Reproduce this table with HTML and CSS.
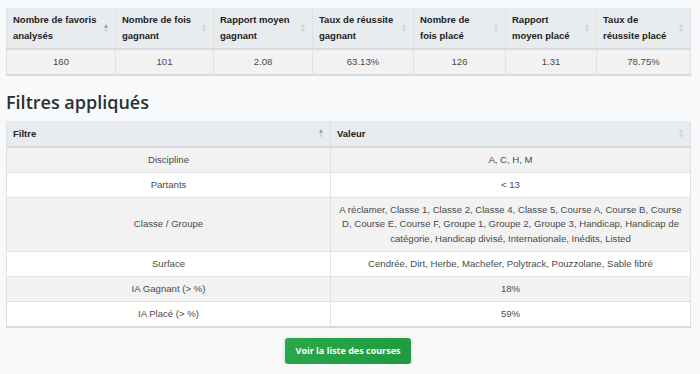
FILE: index.html
```html
<!DOCTYPE html>
<html lang="fr">
<head>
<meta charset="utf-8">
<title>Statistiques</title>
<link rel="stylesheet" href="styles.css">
</head>
<body>
<main class="page">
  <table class="grid stats">
    <thead>
      <tr>
        <th><div class="th-in"><span>Nombre de favoris analysés</span><span class="sort asc"><i class="up"></i><i class="down"></i></span></div></th>
        <th><div class="th-in"><span>Nombre de fois gagnant</span><span class="sort"><i class="up"></i><i class="down"></i></span></div></th>
        <th><div class="th-in"><span>Rapport moyen gagnant</span><span class="sort"><i class="up"></i><i class="down"></i></span></div></th>
        <th><div class="th-in"><span>Taux de réussite gagnant</span><span class="sort"><i class="up"></i><i class="down"></i></span></div></th>
        <th><div class="th-in"><span>Nombre de fois placé</span><span class="sort"><i class="up"></i><i class="down"></i></span></div></th>
        <th><div class="th-in"><span>Rapport moyen placé</span><span class="sort"><i class="up"></i><i class="down"></i></span></div></th>
        <th><div class="th-in"><span>Taux de réussite placé</span><span class="sort"><i class="up"></i><i class="down"></i></span></div></th>
      </tr>
    </thead>
    <tbody>
      <tr>
        <td>160</td><td>101</td><td>2.08</td><td>63.13%</td><td>126</td><td>1.31</td><td>78.75%</td>
      </tr>
    </tbody>
  </table>

  <h2 class="title">Filtres appliqués</h2>

  <table class="grid filters">
    <thead>
      <tr>
        <th><div class="th-in"><span>Filtre</span><span class="sort asc"><i class="up"></i><i class="down"></i></span></div></th>
        <th><div class="th-in"><span>Valeur</span><span class="sort"><i class="up"></i><i class="down"></i></span></div></th>
      </tr>
    </thead>
    <tbody>
      <tr><td>Discipline</td><td>A, C, H, M</td></tr>
      <tr><td>Partants</td><td>&lt; 13</td></tr>
      <tr><td>Classe / Groupe</td><td>A réclamer, Classe 1, Classe 2, Classe 4, Classe 5, Course A, Course B, Course D, Course E, Course F, Groupe 1, Groupe 2, Groupe 3, Handicap, Handicap de catégorie, Handicap divisé, Internationale, Inédits, Listed</td></tr>
      <tr><td>Surface</td><td>Cendrée, Dirt, Herbe, Machefer, Polytrack, Pouzzolane, Sable fibré</td></tr>
      <tr><td>IA Gagnant (&gt; %)</td><td>18%</td></tr>
      <tr><td>IA Placé (&gt; %)</td><td>59%</td></tr>
    </tbody>
  </table>

  <div class="actions">
    <a class="btn" href="#">Voir la liste des courses</a>
  </div>
</main>
</body>
</html>
```

FILE: styles.css
```css
html, body {
  margin: 0;
  padding: 0;
  background: #f8f9fa;
}
body {
  font-family: "Liberation Sans", Arial, sans-serif;
  color: #212529;
}
.page {
  width: 684px;
  margin: 0 0 0 6px;
  padding-top: 8px;
}
.grid {
  width: 684px;
  border-collapse: collapse;
  table-layout: fixed;
  font-size: 9.6px;
}
.grid th,
.grid td {
  box-sizing: border-box;
}
.grid th {
  background: #e9ecef;
  color: #222;
  font-size: 9.5px;
  font-weight: bold;
  text-align: left;
  vertical-align: middle;
  line-height: 16px;
  padding: 4px 7px 4px 6px;
  border: 1px solid #dee2e6;
  border-top: 0;
  border-bottom: 2px solid #d7dbdf;
}
.th-in {
  display: flex;
  align-items: center;
  justify-content: space-between;
  gap: 6px;
}
.sort {
  display: flex;
  flex-direction: column;
  gap: 1px;
  flex: none;
}
.sort i {
  display: block;
  width: 0;
  height: 0;
  border-left: 2.5px solid transparent;
  border-right: 2.5px solid transparent;
}
.sort .up { border-bottom: 4px solid #d0d3d6; }
.sort .down { border-top: 4px solid #d0d3d6; }
.sort.asc .up { border-bottom-color: #999da1; }
.grid td {
  text-align: center;
  color: #4a4a4a;
  line-height: 14.4px;
  padding: 5px 6px 4.6px 6px;
  border: 1px solid #dee2e6;
}
.grid tbody tr:nth-child(odd) td { background: #f2f2f2; }
.grid tbody tr:nth-child(even) td { background: #ffffff; }
.grid tbody tr:last-child td { border-bottom: 2px solid #d7dbdf; }

.stats th:nth-child(1) { width: 109px; }
.stats th:nth-child(2) { width: 98px; }
.stats th:nth-child(3) { width: 99px; }
.stats th:nth-child(4) { width: 101px; }
.stats th:nth-child(5) { width: 92px; }
.stats th:nth-child(6) { width: 91px; }
.stats th:nth-child(7) { width: 94px; }
.stats th { height: 41px; }

.filters th:nth-child(1) { width: 324px; }
.filters th:nth-child(2) { width: 360px; }
.filters th { padding-top: 4px; padding-bottom: 4px; height: 26px; }

.title {
  font-family: "Open Sans", sans-serif;
  font-weight: 600;
  font-size: 18px;
  line-height: 22px;
  color: #2b2f33;
  margin: 15px 0 8px 0;
}

.actions {
  display: flex;
  justify-content: center;
  margin-top: 10px;
}
.btn {
  display: inline-block;
  height: 26px;
  width: 126px;
  box-sizing: border-box;
  line-height: 26px;
  text-align: center;
  background: linear-gradient(135deg, #2aa84a, #1f9a3f);
  color: #fff;
  text-decoration: none;
  font-family: "Open Sans", sans-serif;
  font-weight: 700;
  font-size: 9px;
  border-radius: 3px;
  box-shadow: 0 1px 4px rgba(0,0,0,0.18);
}
```
